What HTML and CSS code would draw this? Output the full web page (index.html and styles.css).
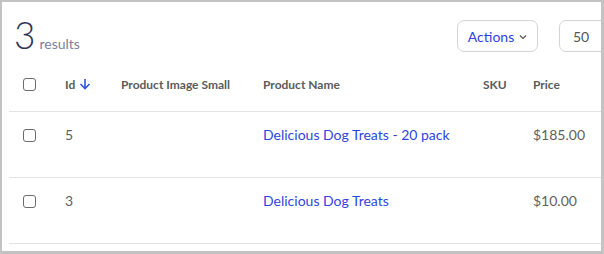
FILE: index.html
```html
<!DOCTYPE html>
<html>
<head>
<meta charset="utf-8">
<link rel="stylesheet" href="styles.css">
</head>
<body>
<div class="panel">
  <div class="toolbar">
    <div class="count"><span class="count-num">3</span><span class="count-label">results</span></div>
    <div class="tools">
      <button class="btn btn-actions">Actions <svg class="chev" width="8" height="6" viewBox="0 0 8 6"><path d="M1 1.5 L4 4.5 L7 1.5" fill="none" stroke="#555" stroke-width="1.2"/></svg></button>
      <div class="btn btn-size">50</div>
    </div>
  </div>
  <div class="table">
    <div class="row head">
      <div class="cell"><span class="check"></span></div>
      <div class="cell">Id <svg class="sort" width="12" height="12" viewBox="0 0 12 12"><path d="M6 1 V10.5 M1.5 6 L6 10.5 L10.5 6" fill="none" stroke="#2f55e4" stroke-width="1.6"/></svg></div>
      <div class="cell">Product Image Small</div>
      <div class="cell">Product Name</div>
      <div class="cell">SKU</div>
      <div class="cell">Price</div>
    </div>
    <div class="row body">
      <div class="cell"><span class="check"></span></div>
      <div class="cell">5</div>
      <div class="cell"></div>
      <div class="cell"><a class="link" href="#">Delicious Dog Treats - 20 pack</a></div>
      <div class="cell"></div>
      <div class="cell">$185.00</div>
    </div>
    <div class="row body">
      <div class="cell"><span class="check"></span></div>
      <div class="cell">3</div>
      <div class="cell"></div>
      <div class="cell"><a class="link" href="#">Delicious Dog Treats</a></div>
      <div class="cell"></div>
      <div class="cell">$10.00</div>
    </div>
  </div>
</div>
</body>
</html>
```
FILE: styles.css
```css
html, body {
  margin: 0;
  padding: 0;
  background: #c3c3c3;
  width: 604px;
  height: 254px;
  overflow: hidden;
}
.panel {
  margin: 2px 3px 3px 2px;
  height: 249px;
  background: #fff;
  overflow: hidden;
  font-family: Lato, "Liberation Sans", sans-serif;
}
.toolbar {
  display: flex;
  align-items: flex-start;
  margin-right: -19px;
  padding-top: 18px;
  padding-left: 12px;
  height: 37px;
}
.count {
  display: flex;
  align-items: baseline;
  line-height: 1;
  margin-top: -4px;
}
.count-num {
  font-size: 37px;
  color: #30355a;
  font-weight: 300;
}
.count-label {
  font-size: 14px;
  color: #7d8197;
  margin-left: 4px;
}
.tools {
  margin-left: auto;
  display: flex;
  gap: 21px;
}
.btn {
  box-sizing: border-box;
  height: 32px;
  border: 1px solid #d4d4d8;
  border-radius: 7px;
  background: #fff;
  font-family: inherit;
  font-size: 14px;
  display: flex;
  align-items: center;
  padding: 0;
}
.btn-actions {
  width: 81px;
  color: #2f3fe0;
  justify-content: center;
  gap: 5px;
}
.chev { margin-top: 1px; }
.btn-size {
  width: 61px;
  color: #555;
  padding-left: 13px;
}
.table {
  margin-left: 7px;
  margin-right: -20px;
}
.row {
  display: grid;
  grid-template-columns: 56px 56px 142px 220px 50px 1fr;
  border-bottom: 1px solid #e3e3e3;
}
.row.head {
  height: 54px;
  align-items: center;
  font-size: 12px;
  font-weight: 700;
  color: #5b5b5b;
}
.row.body {
  height: 65px;
  align-items: start;
  font-size: 14px;
  color: #5f5f5f;
}
.row.body .cell {
  padding-top: 14px;
}
.cell {
  display: flex;
  align-items: center;
  white-space: nowrap;
}
.row.head .cell:first-child,
.row.body .cell:first-child {
  padding-left: 14px;
}
.row.body .cell:first-child { padding-top: 17px; }
.sort { margin-left: 4px; }
.check {
  box-sizing: border-box;
  width: 13px;
  height: 13px;
  border: 1.5px solid #6b6b6b;
  border-radius: 3px;
  display: inline-block;
}
.link {
  color: #2f45e0;
  text-decoration: none;
}
```
